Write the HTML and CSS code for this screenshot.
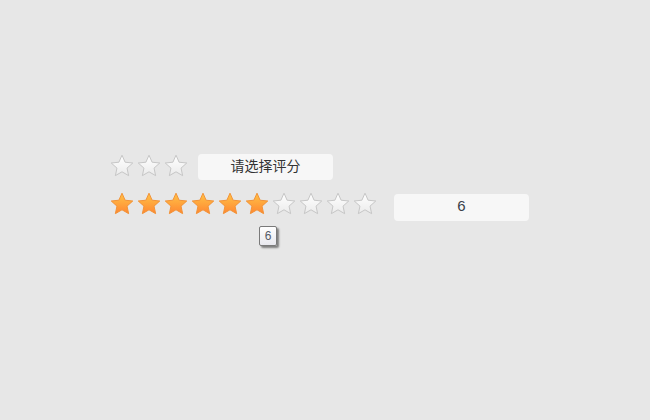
FILE: index.html
```
<!DOCTYPE html>
<html>
<head>
<meta charset="utf-8">
<link rel="stylesheet" href="styles.css">
</head>
<body>
<svg width="0" height="0" class="defs">
  <defs>
    <linearGradient id="gEmpty" x1="0" y1="0" x2="0" y2="1">
      <stop offset="0" stop-color="#ffffff"/>
      <stop offset="1" stop-color="#ebebeb"/>
    </linearGradient>
    <linearGradient id="gFull" x1="0" y1="0" x2="0" y2="1">
      <stop offset="0" stop-color="#ffc447"/>
      <stop offset="1" stop-color="#ff8732"/>
    </linearGradient>
    <path id="star" d="M12 1.2 L15.12 8.21 L22.75 9.01 L17.04 14.14 L18.64 21.64 L12 17.8 L5.36 21.64 L6.96 14.14 L1.25 9.01 L8.88 8.21 Z"/>
  </defs>
</svg>
<div class="page">
  <div class="row row-one">
    <div class="stars">
      <svg class="star empty" viewBox="0 0 24 23"><use href="#star"/></svg>
      <svg class="star empty" viewBox="0 0 24 23"><use href="#star"/></svg>
      <svg class="star empty" viewBox="0 0 24 23"><use href="#star"/></svg>
    </div>
    <div class="box box-one">请选择评分</div>
  </div>
  <div class="row row-two">
    <div class="stars">
      <svg class="star full" viewBox="0 0 24 23"><use href="#star"/></svg>
      <svg class="star full" viewBox="0 0 24 23"><use href="#star"/></svg>
      <svg class="star full" viewBox="0 0 24 23"><use href="#star"/></svg>
      <svg class="star full" viewBox="0 0 24 23"><use href="#star"/></svg>
      <svg class="star full" viewBox="0 0 24 23"><use href="#star"/></svg>
      <div class="star-wrap">
        <svg class="star full" viewBox="0 0 24 23"><use href="#star"/></svg>
        <div class="tip">6</div>
      </div>
      <svg class="star empty" viewBox="0 0 24 23"><use href="#star"/></svg>
      <svg class="star empty" viewBox="0 0 24 23"><use href="#star"/></svg>
      <svg class="star empty" viewBox="0 0 24 23"><use href="#star"/></svg>
      <svg class="star empty" viewBox="0 0 24 23"><use href="#star"/></svg>
    </div>
    <div class="box box-two">6</div>
  </div>
</div>
</body>
</html>
```
FILE: styles.css
```
html, body {
  margin: 0;
  padding: 0;
  background: #e7e7e7;
  width: 650px;
  height: 420px;
  overflow: hidden;
  font-family: "Liberation Sans", "Noto Sans CJK SC", sans-serif;
}
.defs {
  position: absolute;
  width: 0;
  height: 0;
}
.page {
  padding: 154px 0 0 110px;
}
.row {
  display: flex;
  align-items: flex-start;
}
.row-two {
  margin-top: 12px;
}
.stars {
  display: flex;
  gap: 3px;
}
.star {
  width: 24px;
  height: 23px;
  display: block;
  stroke-width: 1;
  stroke-linejoin: round;
}
.star.empty {
  fill: url(#gEmpty);
  stroke: #c6c6c6;
}
.star.full {
  fill: url(#gFull);
  stroke: #f29338;
}
.star-wrap {
  position: relative;
}
.tip {
  position: absolute;
  left: 14px;
  top: 34px;
  width: 16px;
  height: 18px;
  border: 1px solid #7a7a7a;
  border-radius: 2px;
  background: linear-gradient(#ffffff, #e8e8ee);
  box-shadow: 2px 2px 2px rgba(0,0,0,0.45);
  font-size: 12px;
  line-height: 18px;
  text-align: center;
  color: #555a66;
}
.box {
  width: 135px;
  background: #f7f7f7;
  border-radius: 4px;
  text-align: center;
  color: #333;
  font-size: 14px;
}
.box-one {
  margin-left: 10px;
  height: 26px;
  line-height: 25px;
}
.box-two {
  margin-left: 17px;
  margin-top: 2px;
  height: 27px;
  line-height: 24px;
  font-size: 15px;
  color: #3a3f4a;
}
```
